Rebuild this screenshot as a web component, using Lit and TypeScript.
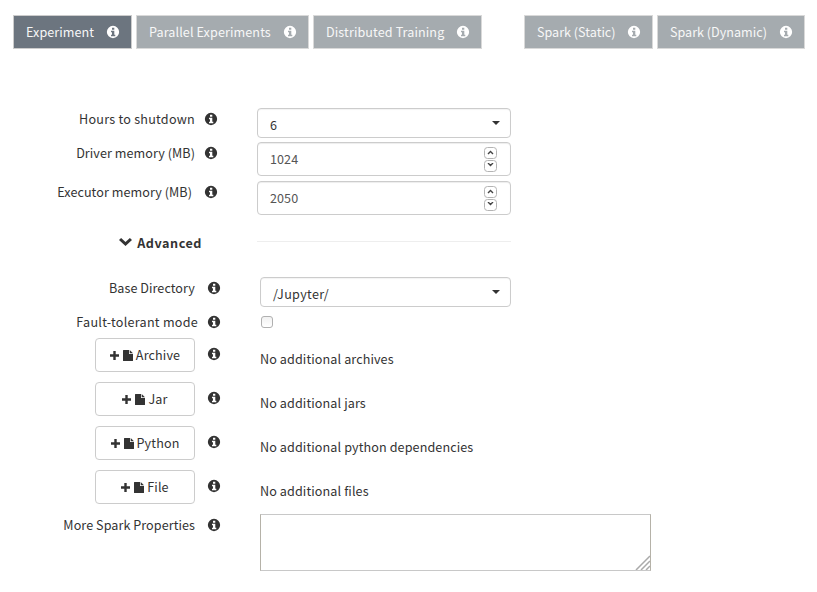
import { LitElement, html, css } from "lit";
import { customElement, property, state } from "lit/decorators.js";
import { classMap } from "lit/directives/class-map.js";

const info = () => html`<svg class="info" viewBox="0 0 12 12">
  <path
    fill-rule="evenodd"
    d="M6-.15A6.15 6.15 0 0 1 6 12.150 6.150 6.150 0 0 1 6-.15zM5 1.700V3.700H7.300V1.700zM4 4.800V6.200H5V8.800H4V10.200H8.300V8.800H7.300V4.800z"
  />
</svg>`;

@customElement("number-field")
class NumberField extends LitElement {
  @property() value = "";
  static styles = css`
    :host {
      display: flex;
      box-sizing: border-box;
      height: 34px;
      align-items: center;
      justify-content: space-between;
      padding: 0 12px;
      border: 1px solid #ccc;
      border-radius: 4px;
      box-shadow: inset 0 1px 1px rgba(0, 0, 0, 0.075);
      color: #555;
    }
    .value { line-height: 20px; }
    .spin { display: flex; flex-direction: column; gap: 1px; margin: 0 1px 0 0; }
    .step {
      box-sizing: border-box;
      width: 13px;
      height: 12px;
      border: 1px solid #b4b4b4;
      border-radius: 3.5px;
      display: flex;
      align-items: center;
      justify-content: center;
      background: #fff;
    }
    .step svg { width: 7px; height: 5px; fill: none; stroke: #444; stroke-width: 1.4; }
  `;
  render() {
    return html`<span class="value">${this.value}</span>
      <span class="spin">
        <span class="step"><svg viewBox="0 0 7 5"><path d="M1 4 3.5 1.5 6 4" /></svg></span>
        <span class="step"><svg viewBox="0 0 7 5"><path d="M1 0 3.5 2.5 6 0" /></svg></span>
      </span>`;
  }
}

@customElement("select-field")
class SelectField extends LitElement {
  @property() value = "";
  static styles = css`
    :host {
      display: flex;
      box-sizing: border-box;
      height: 30px;
      align-items: center;
      justify-content: space-between;
      padding: 0 10px 0 12px;
      border: 1px solid #ccc;
      border-radius: 4px;
      box-shadow: inset 0 1px 1px rgba(0, 0, 0, 0.05);
    }
    .value { line-height: 20px; padding-top: 4px; letter-spacing: 0.3px; }
    .caret { border: 4px solid transparent; border-top-color: #333; border-bottom: 0; }
  `;
  render() {
    return html`<span class="value">${this.value}</span><span class="caret"></span>`;
  }
}

@customElement("app-root")
class AppRoot extends LitElement {
  @state() private mode = "Experiment";

  static styles = css`
    :host {
      display: block;
      box-sizing: border-box;
      width: 817px;
      height: 592px;
      padding-top: 15px;
      overflow: hidden;
      background: #fff;
      color: #333;
      font: 12.6px/20px "Noto Sans CJK SC", "Noto Sans", sans-serif;
      letter-spacing: 0.06px;
      white-space: nowrap;
    }
    .info { display: block; width: 12px; height: 12px; fill: currentColor; flex: none; overflow: visible; }
    .tabs { display: flex; gap: 4px; height: 34px; padding: 0 12px 0 13px; margin-bottom: 59px; }
    .tab {
      box-sizing: border-box;
      display: flex;
      align-items: center;
      justify-content: space-between;
      padding: 0 12px;
      border: 1px solid #d9d9d9;
      background: #a5abaf;
      color: #f7f7f7;
    }
    .tab .info { color: #fff; }
    .active { background: #6c757f; border-color: #ccc; }
    .second { margin-left: 38px; }
    .w1 { width: 119px; }
    .w2 { width: 173px; letter-spacing: 0.1px; }
    .w3 { width: 169px; letter-spacing: 0.1px; }
    .w4 { width: 129px; letter-spacing: 0; }
    .w5 { width: 148px; letter-spacing: 0; }

    .row { display: grid; grid-template-columns: 195px 62px 254px; align-items: start; height: 44px; }
    .label { justify-self: end; padding-top: 1px; }
    .hint { padding: 5px 0 0 10px; }
    .r1 { height: 34px; }
    .r1 .label { letter-spacing: 0.24px; }
    .r2 { height: 39px; }
    .r3 { height: 52px; }
    .r3 .label { padding-right: 3px; }
    .adv .label {
      font-weight: 700;
      letter-spacing: 0.55px;
      padding: 0;
      margin-right: -7px;
      display: flex;
      align-items: center;
      gap: 5px;
    }
    .chevron { width: 13px; height: 8px; fill: #333; margin-top: -2px; }
    .rule { margin-top: 8px; height: 1px; background: #eee; }
    .wide { grid-template-columns: 195px 65px 251px; }
    .wide .hint { padding-left: 13px; }
    .base { height: 35px; }
    .fault { height: 26px; }
    .fault .label { padding: 0; margin-right: -3px; letter-spacing: 0.25px; }
    .fault .hint { padding-top: 4px; }
    .check {
      box-sizing: border-box;
      width: 12px;
      height: 12px;
      margin: 4px 0 0 1px;
      border: 1px solid #b0b0b0;
      border-radius: 3px;
      background: linear-gradient(#f1f1f1, #fff);
    }
    .btn {
      justify-self: end;
      box-sizing: border-box;
      width: 100px;
      height: 34px;
      display: flex;
      align-items: center;
      justify-content: center;
      border: 1px solid #ccc;
      border-radius: 4px;
      letter-spacing: 0.12px;
    }
    .plus { width: 9px; height: 9px; margin-right: 4px; fill: #333; }
    .file { width: 10px; height: 11px; margin: 1px 3px 0 0; fill: #333; }
    .files .hint { padding-top: 10px; }
    .text { padding-top: 11px; letter-spacing: 0.1px; }
    .area {
      display: flex;
      align-items: flex-end;
      justify-content: flex-end;
      box-sizing: border-box;
      width: 391px;
      height: 57px;
      border: 1px solid #c8c8c8;
      border-left-color: #b5b2a8;
      border-right-color: #b5b2a8;
    }
    .grip { width: 15px; height: 15px; stroke: #aaa; stroke-width: 1.5; }
  `;

  private tab(name: string, width: string, second = false) {
    const classes = { tab: true, [width]: true, second, active: this.mode === name };
    return html`<div class=${classMap(classes)} @click=${() => (this.mode = name)}>
      <span>${name}</span>${info()}
    </div>`;
  }

  private fileRow(name: string, text: string) {
    return html`<div class="row wide files">
      <div class="btn">
        <svg class="plus" viewBox="0 0 9 9"><path d="M3.3 0h2.4v3.3H9v2.4H5.7V9H3.3V5.7H0V3.3h3.3z" /></svg>
        <svg class="file" viewBox="0 0 10 11"><path d="M.5 0H6V4H10v6.5q0 .5-.5.5H.5Q0 11 0 10.5V.5Q0 0 .5 0zM6.7 0 10 3.3H6.7z" /></svg>
        <span>${name}</span>
      </div>
      <div class="hint">${info()}</div>
      <div class="text">${text}</div>
    </div>`;
  }

  render() {
    return html`
      <div class="tabs">
        ${this.tab("Experiment", "w1")} ${this.tab("Parallel Experiments", "w2")}
        ${this.tab("Distributed Training", "w3")} ${this.tab("Spark (Static)", "w4", true)}
        ${this.tab("Spark (Dynamic)", "w5")}
      </div>
      <div class="row r1">
        <div class="label">Hours to shutdown</div>
        <div class="hint">${info()}</div>
        <select-field value="6"></select-field>
      </div>
      <div class="row r2">
        <div class="label">Driver memory (MB)</div>
        <div class="hint">${info()}</div>
        <number-field value="1024"></number-field>
      </div>
      <div class="row r3">
        <div class="label">Executor memory (MB)</div>
        <div class="hint">${info()}</div>
        <number-field value="2050"></number-field>
      </div>
      <div class="row adv">
        <div class="label">
          <svg class="chevron" viewBox="0 0 13 8"><path d="M2.1 0 6.5 4 10.9 0 13 2.1 6.5 8 0 2.1z" /></svg>
          <span>Advanced</span>
        </div>
        <span></span>
        <div class="rule"></div>
      </div>
      <div class="row wide base">
        <div class="label">Base Directory</div>
        <div class="hint">${info()}</div>
        <select-field value="/Jupyter/"></select-field>
      </div>
      <div class="row wide fault">
        <div class="label">Fault-tolerant mode</div>
        <div class="hint">${info()}</div>
        <div class="check"></div>
      </div>
      ${this.fileRow("Archive", "No additional archives")} ${this.fileRow("Jar", "No additional jars")}
      ${this.fileRow("Python", "No additional python dependencies")} ${this.fileRow("File", "No additional files")}
      <div class="row wide">
        <div class="label">More Spark Properties</div>
        <div class="hint">${info()}</div>
        <div class="area">
          <svg class="grip" viewBox="0 0 15 15"><path d="M1 15 15 1M6 15 15 6M11 15 15 11" /></svg>
        </div>
      </div>
    `;
  }
}
